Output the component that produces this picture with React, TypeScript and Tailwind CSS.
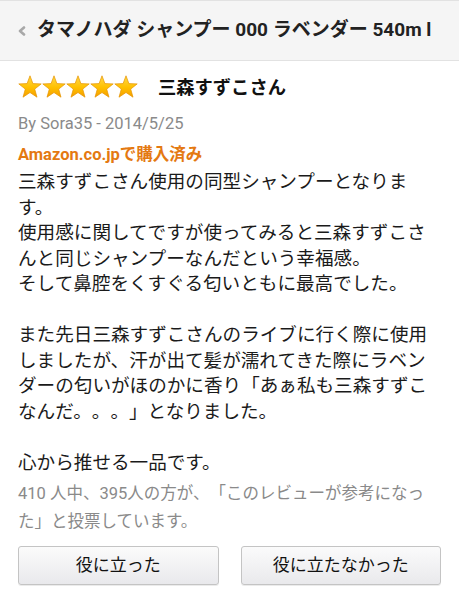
import React from "react";

const FONT = { fontFamily: "Roboto, 'Noto Sans CJK JP', sans-serif" };

function Star({ id }: { id: string }) {
  return (
    <svg width="24" height="24" viewBox="0 0 24 24">
      <defs>
        <linearGradient id={id} x1="0" y1="0" x2="0" y2="1">
          <stop offset="0" stopColor="#FFD84A" />
          <stop offset="0.55" stopColor="#FFC000" />
          <stop offset="1" stopColor="#F59E00" />
        </linearGradient>
      </defs>
      <path
        d="M12 0.8 L14.9 8.6 L23.2 8.9 L16.7 14.1 L19 22.2 L12 17.5 L5 22.2 L7.3 14.1 L0.8 8.9 L9.1 8.6 Z"
        fill={`url(#${id})`}
        stroke="#E59400"
        strokeWidth="0.7"
        strokeLinejoin="round"
      />
    </svg>
  );
}

const body: string[] = [
  "三森すずこさん使用の同型シャンプーとなりま",
  "す。",
  "使用感に関してですが使ってみると三森すずこさ",
  "んと同じシャンプーなんだという幸福感。",
  "そして鼻腔をくすぐる匂いともに最高でした。",
  "",
  "また先日三森すずこさんのライブに行く際に使用",
  "しましたが、汗が出て髪が濡れてきた際にラベン",
  "ダーの匂いがほのかに香り「あぁ私も三森すずこ",
  "なんだ。。。」となりました。",
  "",
  "心から推せる一品です。",
];

export default function App() {
  return (
    <div className="w-[459px] h-[600px] bg-white overflow-hidden [text-spacing-trim:space-all]" style={FONT}>
      <div className="h-[61px] bg-[#f5f5f5] border-t border-b border-[#e2e2e2] flex items-center pl-[18px]">
        <svg width="8" height="10" viewBox="0 0 8 10" className="shrink-0">
          <polyline points="6,1.5 2,5 6,8.5" fill="none" stroke="#a8a8a8" strokeWidth="2.6" strokeLinejoin="round" strokeLinecap="round" />
        </svg>
        <div className="ml-[11px] text-[19px] font-bold text-[#222] whitespace-nowrap">
          タマノハダ シャンプー 000 ラベンダー 540m l
        </div>
      </div>

      <div className="px-[18px] pt-[12px]">
        <div className="flex items-center h-[28px]">
          <div className="flex">
            <Star id="s1" />
            <Star id="s2" />
            <Star id="s3" />
            <Star id="s4" />
            <Star id="s5" />
          </div>
          <div className="ml-[20px] text-[18.3px] font-bold text-[#111] leading-none pt-[3px]">三森すずこさん</div>
        </div>

        <div className="mt-[12px] h-[22px] leading-[22px] text-[16.5px] text-[#8a8a8a]">By Sora35 - 2014/5/25</div>
        <div className="mt-[9px] h-[22px] leading-[22px] text-[16.5px] font-bold text-[#e47911]">Amazon.co.jpで購入済み</div>

        <div className="mt-[4px] text-[18.6px] leading-[25.5px] text-[#1a1a1a]">
          {body.map((l, i) =>
            l === "" ? (
              <div key={i} className="h-[25.5px]" />
            ) : (
              <div key={i} className="whitespace-nowrap">
                {l}
              </div>
            )
          )}
        </div>

        <div className="mt-[4px] text-[16.5px] leading-[28px] text-[#8a8a8a]">
          <div className="whitespace-nowrap">410 人中、395人の方が、「このレビューが参考になっ</div>
          <div className="whitespace-nowrap">た」と投票しています。</div>
        </div>

        <div className="mt-[10px] flex gap-[22px]">
          <button className="w-[201px] h-[39px] rounded-[3px] border border-[#c4c4c4] bg-gradient-to-b from-[#fbfbfb] to-[#e9e9ec] text-[17px] text-[#111] shadow-[0_1px_0_rgba(0,0,0,0.08)]">
            役に立った
          </button>
          <button className="w-[201px] h-[39px] rounded-[3px] border border-[#c4c4c4] bg-gradient-to-b from-[#fbfbfb] to-[#e9e9ec] text-[17px] text-[#111] shadow-[0_1px_0_rgba(0,0,0,0.08)]">
            役に立たなかった
          </button>
        </div>
      </div>
    </div>
  );
}
